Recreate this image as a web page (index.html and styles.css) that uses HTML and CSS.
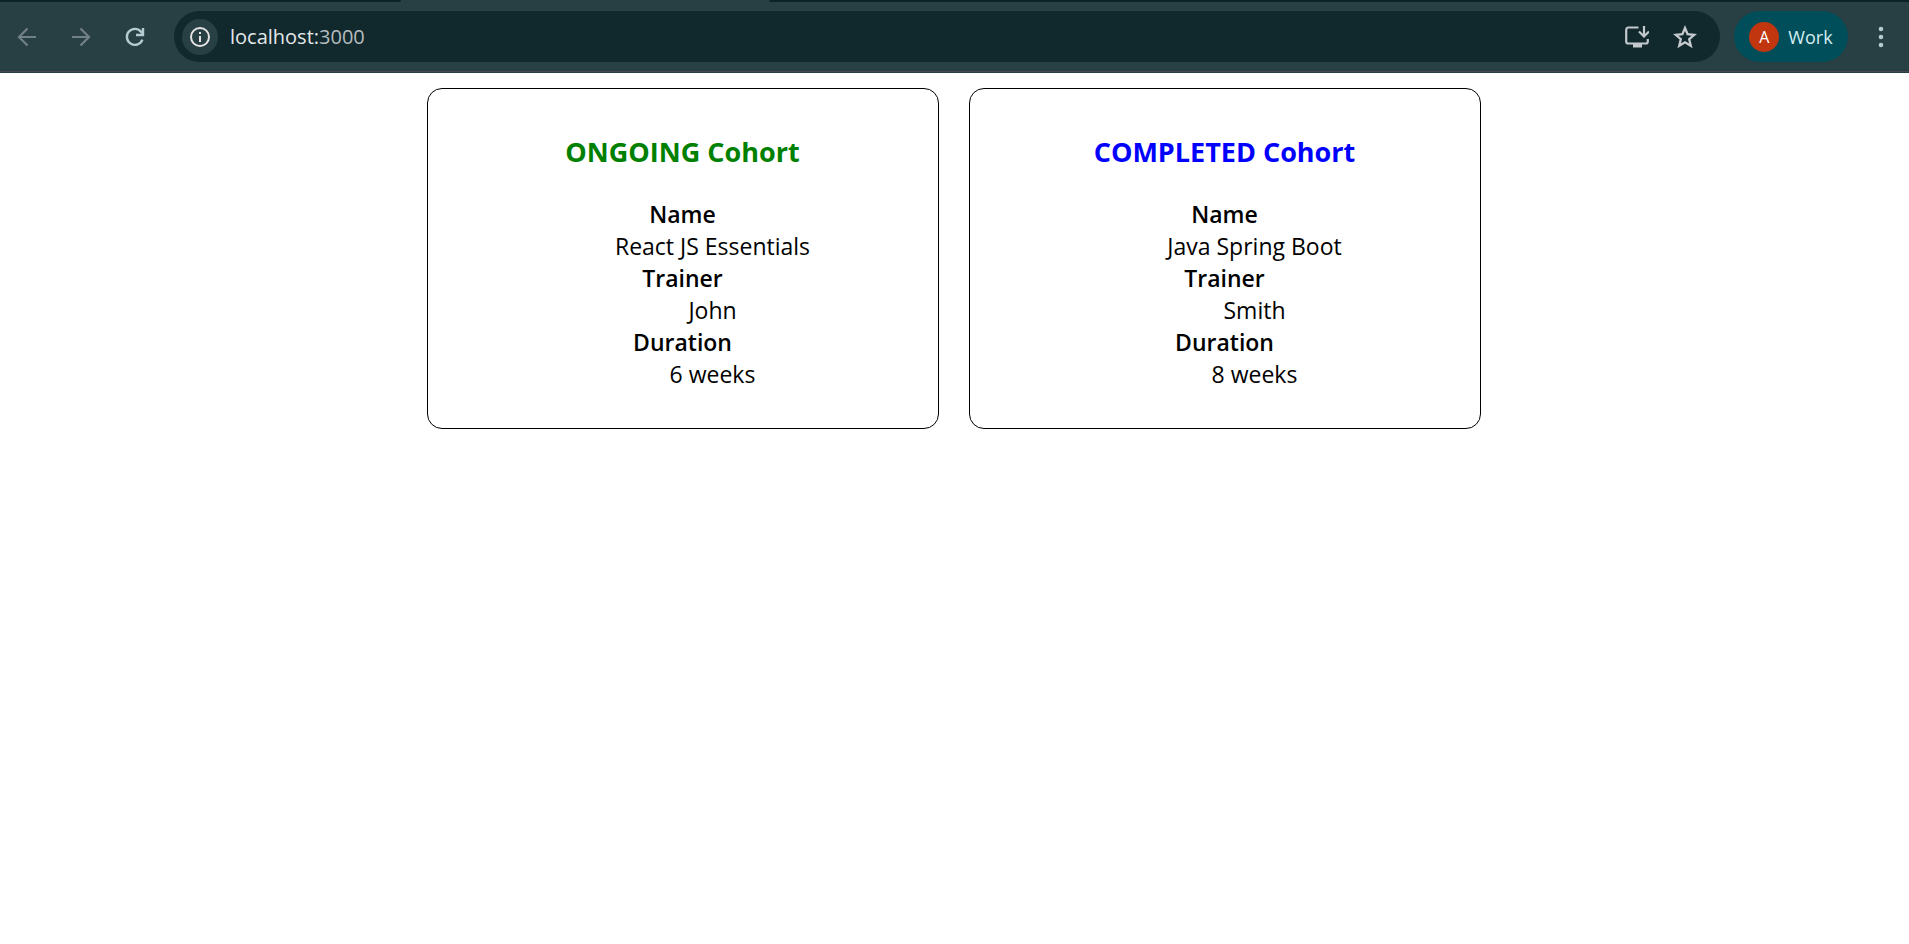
FILE: index.html
```html
<!DOCTYPE html>
<html lang="en">
<head>
<meta charset="utf-8">
<title>Cohorts Details</title>
<link rel="stylesheet" href="styles.css">
</head>
<body>
<header class="browser">
  <div class="tab-strip"><span class="strip-left"></span><span class="strip-tab"></span><span class="strip-right"></span></div>
  <div class="toolbar">
    <button class="nav-button nav-disabled" aria-label="Back" disabled>
      <svg width="20" height="20" viewBox="0 0 20 20" fill="none" stroke="currentColor" stroke-width="2.200"><path d="M19 10H3M10.500 1.500L2 10l8.500 8.500"/></svg>
    </button>
    <button class="nav-button nav-disabled" aria-label="Forward" disabled>
      <svg width="20" height="20" viewBox="0 0 20 20" fill="none" stroke="currentColor" stroke-width="2.200"><path d="M1 10h16M9.500 1.500L18 10l-8.500 8.500"/></svg>
    </button>
    <button class="nav-button" aria-label="Reload">
      <svg width="20" height="20" viewBox="0 0 20 20" fill="none" stroke="currentColor" stroke-width="2.400"><path d="M17.400 12.600A8 8 0 1 1 15.900 4.600L18 7"/><path d="M18 1v7h-7"/></svg>
    </button>
    <div class="address">
      <button class="site-info" aria-label="Site information">
        <svg width="20" height="20" viewBox="0 0 20 20"><circle cx="10" cy="10" r="9" fill="none" stroke="currentColor" stroke-width="2"/><path d="M9 5h2v2H9zM9 9h2v6H9z" fill="currentColor"/></svg>
      </button>
      <a class="url" href="#">localhost:<span class="port">3000</span></a>
      <button class="page-action" aria-label="Install app">
        <svg width="24" height="24" viewBox="0 0 24 24" fill="none" stroke="currentColor" stroke-width="2.200"><path d="M13.500 2.500H3.500Q1.200 2.500 1.200 5v11.500Q1.200 18.500 3 18.500h18Q22.800 18.500 22.800 16.500V14"/><path d="M8 18h9v4.500H8z" fill="currentColor" stroke="none"/><path d="M19 1v10M14 6.500l5 5 5-5"/></svg>
      </button>
      <button class="page-action" aria-label="Bookmark">
        <svg width="24" height="24" viewBox="0 0 24 24" fill="none" stroke="currentColor" stroke-width="2.300"><path d="M12 3l2.600 6.200 6.700.6-5.100 4.400 1.600 6.600-5.800-3.500-5.800 3.500 1.600-6.600-5.100-4.400 6.700-.6z"/></svg>
      </button>
    </div>
    <button class="profile"><span class="avatar">A</span>Work</button>
    <button class="menu" aria-label="Menu">
      <svg width="6" height="24" viewBox="0 0 6 24" fill="currentColor"><circle cx="3" cy="4" r="2.300"/><circle cx="3" cy="12" r="2.300"/><circle cx="3" cy="20" r="2.300"/></svg>
    </button>
  </div>
</header>
<main class="cohorts">
  <section class="card">
    <h1 class="title ongoing">ONGOING Cohort</h1>
    <dl class="details">
      <dt>Name</dt><dd>React JS Essentials</dd>
      <dt>Trainer</dt><dd>John</dd>
      <dt>Duration</dt><dd>6 weeks</dd>
    </dl>
  </section>
  <section class="card">
    <h1 class="title completed">COMPLETED Cohort</h1>
    <dl class="details">
      <dt>Name</dt><dd>Java Spring Boot</dd>
      <dt>Trainer</dt><dd>Smith</dd>
      <dt>Duration</dt><dd>8 weeks</dd>
    </dl>
  </section>
</main>
</body>
</html>
```
FILE: styles.css
```css
* { box-sizing: border-box; }
body {
  margin: 0;
  background: #fff;
  color: #000;
  font-family: "Open Sans", "Noto Sans", sans-serif;
}
button {
  display: flex;
  align-items: center;
  justify-content: center;
  padding: 0;
  border: 0;
  background: none;
  color: inherit;
  font: inherit;
}
svg { display: block; flex: none; }
.browser {
  background: #283f44;
  border-bottom: 1px solid #283f44;
}
.tab-strip {
  display: flex;
  height: 2px;
}
.strip-left, .strip-right { background: #0b2327; }
.strip-left { width: 21%; border-bottom-right-radius: 4px; }
.strip-tab { width: 368px; }
.strip-right { flex: 1; border-bottom-left-radius: 4px; }
.toolbar {
  display: flex;
  align-items: center;
  height: 70px;
  border-bottom: 1px solid #46484f;
  color: #b5cbd1;
}
.nav-button { width: 54px; height: 50px; }
.nav-disabled { color: #728186; }
.address {
  display: flex;
  align-items: center;
  flex: 1;
  height: 51px;
  margin: 0 14px 0 12px;
  padding: 0 11px 0 8px;
  border-radius: 26px;
  background: #11282d;
  color: #c4c9cd;
}
.site-info {
  width: 36px;
  height: 36px;
  border-radius: 50%;
  background: #283f44;
  color: #e3e3e3;
}
.url {
  flex: 1;
  margin-left: 12px;
  color: #e3e8e9;
  font-size: 20px;
  text-decoration: none;
}
.port { color: #b6bdbf; }
.page-action { width: 48px; height: 48px; }
.profile {
  gap: 9px;
  width: 114px;
  height: 51px;
  border-radius: 26px;
  background: #004e59;
  color: #d5edf2;
  font-size: 18px;
}
.avatar {
  width: 30px;
  border-radius: 50%;
  background: #c1360f;
  color: #fff;
  font-size: 16px;
  line-height: 30px;
}
.menu { width: 56px; height: 50px; margin-left: 5px; }
.cohorts {
  display: flex;
  flex-wrap: wrap;
  justify-content: center;
  gap: 30px;
  padding: 15px 16px 15px 14px;
}
.card {
  width: 512px;
  padding: 44px 12px 38px;
  border: 1px solid #000;
  border-radius: 15px;
  text-align: center;
}
.title {
  margin: 0 0 27px;
  font-size: 27px;
  font-weight: 700;
  line-height: 38px;
}
.ongoing { color: green; }
.completed { color: blue; }
.details {
  margin: 0;
  font-size: 23px;
  line-height: 32px;
}
.details dt { font-weight: 600; }
.details dd { margin: 0 0 0 60px; }
```
